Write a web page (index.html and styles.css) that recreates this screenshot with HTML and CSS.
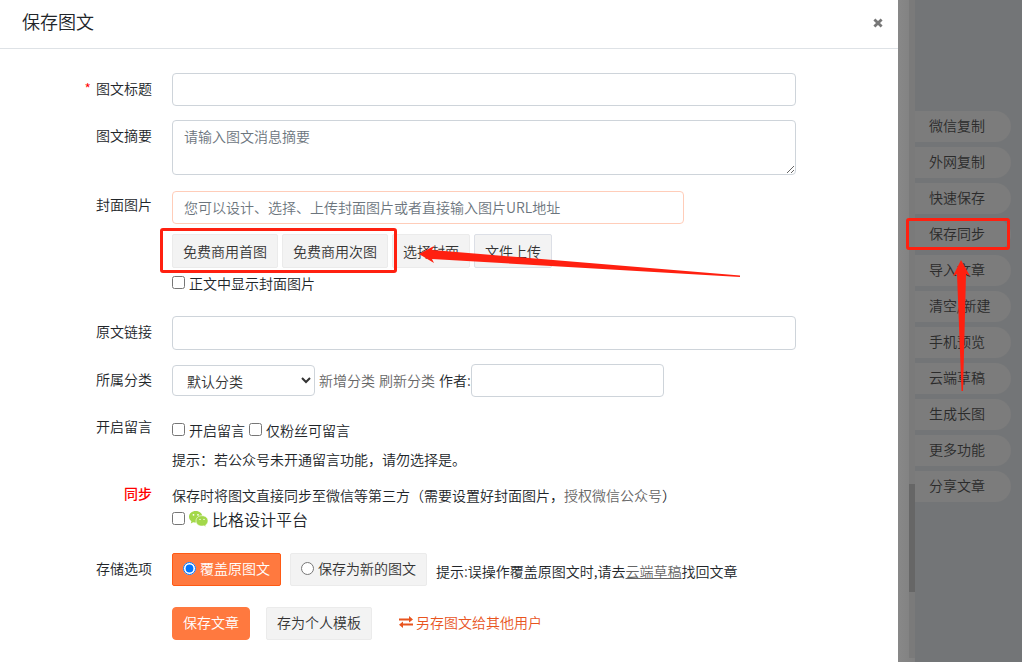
FILE: index.html
```html
<!DOCTYPE html>
<html lang="zh-CN">
<head>
<meta charset="utf-8">
<title>保存图文</title>
<link rel="stylesheet" href="styles.css">
</head>
<body>
<main class="dialog">
  <header class="dialog-head">
    <h1 class="dialog-title">保存图文</h1>
    <button class="close" type="button" aria-label="关闭">
      <svg width="10" height="10" viewBox="0 0 10 10"><path d="M1.4 1.4L8.6 8.6M8.6 1.4L1.4 8.6" stroke="#777" stroke-width="2.8"/></svg>
    </button>
  </header>
  <form class="form">
    <div class="row">
      <label class="label" for="title"><span class="star">*</span>图文标题</label>
      <input class="field" id="title" type="text">
    </div>
    <div class="row row-summary">
      <label class="label" for="summary">图文摘要</label>
      <textarea class="field area" id="summary" placeholder="请输入图文消息摘要"></textarea>
    </div>
    <div class="row row-cover">
      <label class="label" for="cover">封面图片</label>
      <div class="stack">
        <input class="field cover-field" id="cover" type="text" placeholder="您可以设计、选择、上传封面图片或者直接输入图片URL地址">
        <div class="cover-buttons">
          <button class="btn btn-tall" type="button">免费商用首图</button>
          <button class="btn btn-tall" type="button">免费商用次图</button>
          <button class="btn btn-tall" type="button">选择封面</button>
          <button class="btn btn-tall btn-file" type="button">文件上传</button>
          <span class="mark mark-cover"></span>
          <svg class="arrow arrow-cover" width="322" height="34" viewBox="0 0 322 34"><path d="M0 10L15 2L13 6L321 31.500L321 33L13 15L15 19Z" fill="#ff2010"/></svg>
        </div>
        <label class="check"><input type="checkbox">正文中显示封面图片</label>
      </div>
    </div>
    <div class="row row-link">
      <label class="label" for="link">原文链接</label>
      <input class="field field-tall" id="link" type="text">
    </div>
    <div class="row">
      <label class="label" for="category">所属分类</label>
      <div class="inline">
        <select class="select" id="category"><option>默认分类</option></select>
        <a class="link" href="#">新增分类</a>
        <a class="link" href="#">刷新分类</a>
        <label class="author">作者:<input class="field author-field" type="text"></label>
      </div>
    </div>
    <div class="row">
      <span class="label">开启留言</span>
      <div class="stack comments">
        <div class="inline">
          <label class="check"><input type="checkbox">开启留言</label>
          <label class="check"><input type="checkbox">仅粉丝可留言</label>
        </div>
        <p class="tip">提示：若公众号未开通留言功能，请勿选择是。</p>
      </div>
    </div>
    <div class="row row-sync">
      <span class="label label-red">同步</span>
      <div class="stack sync">
        <p class="text">保存时将图文直接同步至微信等第三方（需要设置好封面图片，<a class="link" href="#">授权微信公众号</a>）</p>
        <label class="check check-large"><input type="checkbox">
          <svg width="19" height="17" viewBox="0 0 19 17">
            <path d="M6.8 0C2.8 0 0 2.6 0 5.8c0 1.900.9 3.400 2.400 4.500l-.6 2.200 2.400-1.200c.9.2 1.700.3 2.600.3C10.700 11.600 13.400 9 13.400 5.800S10.700 0 6.800 0z" fill="#a3d84a"/>
            <path d="M13 4.700c-3.500 0-6 2.200-6 5.200s2.500 5.200 6 5.200c.7 0 1.400-.1 2-.3l2.100 1.200-.5-1.900c1.500-1 2.400-2.500 2.400-4.200 0-3-2.600-5.200-6-5.200z" fill="#a3d84a" stroke="#fff" stroke-width=".6"/>
            <g fill="#fff"><circle cx="4.500" cy="3.800" r=".9"/><circle cx="9" cy="3.800" r=".9"/><circle cx="11" cy="8.400" r=".7"/><circle cx="15" cy="8.400" r=".7"/></g>
          </svg>
          <span>比格设计平台</span></label>
      </div>
    </div>
    <div class="row row-store">
      <span class="label">存储选项</span>
      <div class="inline store">
        <label class="btn option option-on"><input type="radio" name="store" checked>覆盖原图文</label>
        <label class="btn option"><input type="radio" name="store">保存为新的图文</label>
        <span class="store-tip">提示:误操作覆盖原图文时,请去<a class="link underlined" href="#">云端草稿</a>找回文章</span>
      </div>
    </div>
    <div class="actions">
      <button class="btn btn-primary" type="button">保存文章</button>
      <button class="btn" type="button">存为个人模板</button>
      <a class="transfer" href="#"><svg width="14" height="12" viewBox="0 0 14 12"><path d="M0 2.500h10V0l4 3.500-4 3V4.500H0zM14 7.500H4V5.500L0 8.800 4 12V9.500h10z" fill="#e8541e"/></svg>另存图文给其他用户</a>
    </div>
  </form>
</main>
<div class="gutter"><div class="track"><div class="thumb"></div></div></div>
<aside class="side">
  <nav class="menu">
    <button class="item" type="button">微信复制</button>
    <button class="item" type="button">外网复制</button>
    <button class="item" type="button">快速保存</button>
    <button class="item" type="button">保存同步<span class="mark mark-sync"></span></button>
    <button class="item" type="button">导入文章</button>
    <button class="item" type="button">清空/新建</button>
    <button class="item" type="button">手机预览</button>
    <button class="item" type="button">云端草稿</button>
    <button class="item" type="button">生成长图</button>
    <button class="item" type="button">更多功能</button>
    <button class="item" type="button">分享文章</button>
    <svg class="arrow arrow-sync" width="18" height="132" viewBox="0 0 18 132"><path d="M8 0L17 16L13 14L10 131H8.500L4 14L0 16Z" fill="#ff2010"/></svg>
  </nav>
</aside>
</body>
</html>
```
FILE: styles.css
```css
* { box-sizing: border-box; }
body {
  margin: 0;
  min-height: 100vh;
  display: flex;
  background: #737577;
  color: #212529;
  font: 350 14px/21px "Noto Sans CJK SC", sans-serif;
}
button, input, select, textarea { font: inherit; color: inherit; }
p, h1 { margin: 0; }
a { text-decoration: none; }
.dialog { flex: 1; min-width: 0; background: #fff; }
.dialog-head {
  display: flex;
  align-items: center;
  justify-content: space-between;
  height: 49px;
  padding: 0 15px 4px 22px;
  border-bottom: 1px solid #dee2e6;
}
.dialog-title { padding-bottom: 2px; font-size: 18px; font-weight: 350; line-height: 27px; }
.close { display: flex; padding: 2px 0 0; border: 0; background: none; }
.form { display: flex; flex-direction: column; padding: 24px 102px 22px 0; }
.row {
  display: grid;
  grid-template-columns: 152px minmax(0, 1fr);
  column-gap: 20px;
  align-items: start;
  margin-bottom: 14px;
}
.row-summary { margin-bottom: 16px; }
.row-cover { margin-bottom: 22px; }
.row-cover > .label { padding-top: 3px; }
.row-sync { margin: -6px 0 22px; }
.row-store { margin-bottom: 21px; }
.label { padding-top: 5px; text-align: right; }
.label-red { color: #f00; font-weight: 500; }
.star { margin-right: 5px; color: #f00; }
.field {
  display: block;
  width: 100%;
  height: 33px;
  padding: 5px 11px;
  border: 1px solid #ced4da;
  border-radius: 4px;
  background: #fff;
}
.field::placeholder { color: #6c757d; opacity: 1; }
.field-tall { height: 34px; }
.area { height: 55px; resize: vertical; }
.cover-field { width: 82%; padding: 4px 11px 6px; border-color: #ffcdb9; }
.stack { display: flex; flex-direction: column; align-items: flex-start; }
.inline { display: flex; align-items: center; gap: 4px; }
.cover-buttons { position: relative; display: flex; gap: 4px; margin: 10px 0 5px; }
.btn {
  height: 33px;
  padding: 0 10px 2px;
  border: 1px solid #ebebeb;
  border-radius: 2px;
  background: #f3f3f3;
  color: #333;
  white-space: nowrap;
}
.btn-tall { height: 34px; padding-bottom: 0; }
.btn-file { border-color: #dcdfe6; }
.check { display: flex; align-items: center; gap: 4px; white-space: nowrap; }
.check input, .option input { width: 13px; height: 13px; margin: 0 0 2px; }
.check-large { font-size: 16px; line-height: 24px; }
.select {
  width: 143px;
  height: 31px;
  padding: 0 0 0 10px;
  border: 1px solid #ced4da;
  border-radius: 4px;
  background: #fff;
  color: #333;
}
.link { color: #666; }
.author { display: flex; align-items: center; white-space: nowrap; }
.author-field { width: 193px; }
.comments { gap: 8px; padding-top: 9px; }
.sync { gap: 1px; padding-top: 7px; }
.text, .tip { white-space: nowrap; }
.store { gap: 9px; }
.option { display: flex; align-items: center; gap: 4px; }
.option input { margin-bottom: 0; }
.option-on { border-color: #ff5a14; background: #ff793f; color: #fff; }
.store-tip { padding-top: 4px; white-space: nowrap; }
.underlined { text-decoration: underline; }
.actions { display: flex; align-items: center; gap: 16px; margin-left: 172px; }
.btn-primary { border-color: #ff793f; border-radius: 4px; background: #ff793f; color: #fff; }
.transfer { display: flex; align-items: center; gap: 3px; margin-left: 11px; padding-bottom: 3px; color: #e8541e; white-space: nowrap; }
.gutter {
  display: flex;
  justify-content: flex-end;
  width: 17px;
  padding-bottom: 4px;
  background: linear-gradient(90deg, #888, #808080);
}
.track { width: 6px; padding-top: 484px; background: #7a7a7a; }
.thumb { height: 108px; background: #666; }
.side { width: 107px; padding: 111px 11px 0 0; }
.menu { position: relative; display: flex; flex-direction: column; gap: 5px; }
.item {
  position: relative;
  height: 31px;
  padding: 0 0 2px 14px;
  border: 0;
  border-radius: 0 16px 16px 0;
  background: #7c7c7c;
  color: #2b2b2b;
  text-align: left;
}
.mark { position: absolute; border: 3px solid #ff2010; border-radius: 3px; pointer-events: none; }
.mark-cover { left: -12px; top: -6px; width: 237px; height: 45px; }
.mark-sync { left: -9px; top: -1px; width: 104px; height: 32px; }
.arrow { position: absolute; pointer-events: none; }
.arrow-cover { left: 247px; top: 10px; }
.arrow-sync { left: 38px; top: 149px; }
```
